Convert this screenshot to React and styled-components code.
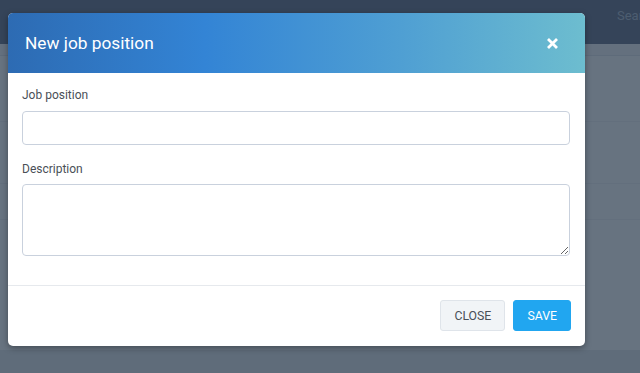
import React from "react";
import styled, { createGlobalStyle } from "styled-components";

const GlobalStyle = createGlobalStyle`
  html, body {
    margin: 0;
    padding: 0;
    width: 640px;
    height: 373px;
    overflow: hidden;
    font-family: Roboto, "Liberation Sans", sans-serif;
  }
  * { box-sizing: border-box; }
`

const Page = styled.div`
  position: relative;
  width: 640px;
  height: 373px;
  background: #fff;
  overflow: hidden;
  display: flex;
  flex-direction: column;
`

const TopBar = styled.div`
  height: 44px;
  flex-shrink: 0;
  background: #59637c;
  display: flex;
  justify-content: flex-end;
  align-items: flex-start;
  overflow: hidden;
`

const Search = styled.div`
  width: 60px;
  margin-right: -37px;
  padding-top: 8px;
  font-size: 13px;
  color: #a6b4c8;
  white-space: nowrap;
`

const SubBar = styled.div`
  height: 12px;
  flex-shrink: 0;
  background: #f4f6f8;
  border-bottom: 1px solid #e0e4e9;
`

const Row = styled.div`
  height: ${p => p.h}px;
  flex-shrink: 0;
  border-bottom: 1px solid #f0f2f5;
`

const Filler = styled.div`
  flex: 1;
`

const BottomBand = styled.div`
  height: 23px;
  flex-shrink: 0;
  background: #e4e6ea;
`

const Backdrop = styled.div`
  position: absolute;
  inset: 0;
  background: rgba(39, 56, 74, 0.7);
  padding: 13px 0 0 8px;
`

const Modal = styled.div`
  width: 577px;
  background: #fff;
  border-radius: 5px;
  box-shadow: 0 2px 6px rgba(0, 0, 0, 0.35);
  overflow: hidden;
`

const Header = styled.div`
  height: 60px;
  padding: 0 26px 0 17px;
  display: flex;
  align-items: center;
  justify-content: space-between;
  background: linear-gradient(to right, #2d6bb3 0%, #3384d5 34%, #4f9fd3 68%, #6dbdcf 100%);
`

const Title = styled.h2`
  margin: 0;
  font-size: 17.3px;
  font-weight: 400;
  color: #fff;
`

const CloseX = styled.svg`
  width: 13px;
  height: 13px;
  display: block;
`

const Body = styled.div`
  padding: 14px 15px 29px 14px;
  display: flex;
  flex-direction: column;
`

const Label = styled.label`
  font-size: 12px;
  line-height: 16px;
  color: #4a4f57;
  margin-bottom: ${p => p.gap}px;
`

const Input = styled.input`
  width: 100%;
  height: 34px;
  border: 1px solid #c9d1dd;
  border-radius: 4px;
  margin-bottom: 16px;
  outline: none;
  font-family: inherit;
`

const TextArea = styled.textarea`
  width: 100%;
  height: 72px;
  border: 1px solid #c9d1dd;
  border-radius: 4px;
  outline: none;
  display: block;
  font-family: inherit;
`

const Footer = styled.div`
  border-top: 1px solid #e6e9ed;
  padding: 14px 14px 15px;
  display: flex;
  justify-content: flex-end;
  gap: 8px;
`

const Button = styled.button`
  height: 31px;
  padding: 0 13px;
  border-radius: 3px;
  font-family: inherit;
  font-size: 12.3px;
  text-transform: uppercase;
  border: 1px solid ${p => (p.primary ? "#21a6f0" : "#dfe4ea")};
  background: ${p => (p.primary ? "#21a6f0" : "#f1f4f7")};
  color: ${p => (p.primary ? "#fff" : "#4a4f57")};
`

export default function App() {
  return (
    <>
      <GlobalStyle />
      <Page>
        <TopBar>
          <Search>Search</Search>
        </TopBar>
        <SubBar />
        <Row h={66} />
        <Row h={62} />
        <Row h={36} />
        <Filler />
        <BottomBand />
        <Backdrop>
          <Modal>
            <Header>
              <Title>New job position</Title>
              <CloseX viewBox="0 0 13 13">
                <path d="M2 2 L11 11 M11 2 L2 11" stroke="#fff" strokeWidth="2.8" strokeLinecap="butt" />
              </CloseX>
            </Header>
            <Body>
              <Label gap={8}>Job position</Label>
              <Input type="text" />
              <Label gap={7}>Description</Label>
              <TextArea />
            </Body>
            <Footer>
              <Button>Close</Button>
              <Button primary>Save</Button>
            </Footer>
          </Modal>
        </Backdrop>
      </Page>
    </>
  );
}
